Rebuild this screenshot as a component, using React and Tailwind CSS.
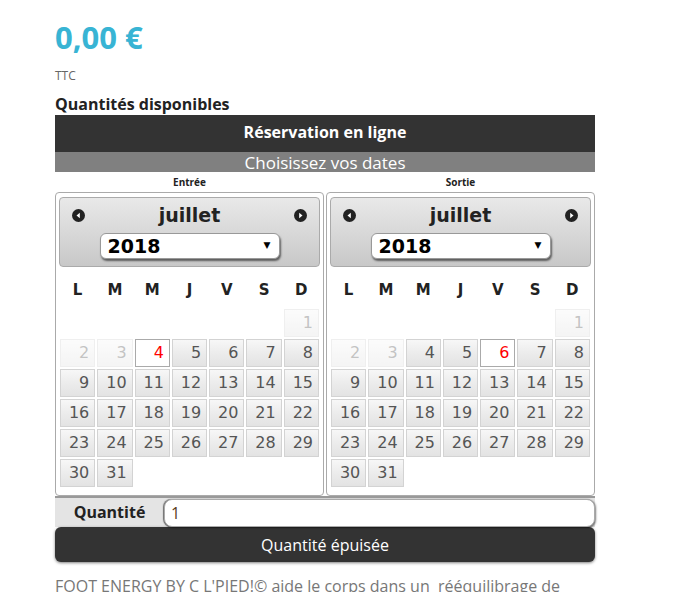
const days = ["L", "M", "M", "J", "V", "S", "D"];

function Arrow({ dir }) {
  return (
    <svg width="13" height="13" viewBox="0 0 13 13">
      <circle cx="6.5" cy="6.5" r="6.5" fill="#222" />
      {dir === "prev" ? (
        <path d="M4.5 6.5 L7.8 3.8 L7.8 9.2 Z" fill="#fff" />
      ) : (
        <path d="M8.5 6.5 L5.2 3.8 L5.2 9.2 Z" fill="#fff" />
      )}
    </svg>
  );
}

function Cell({ n, state }) {
  if (!n) return <div className="h-[28px]" />;
  let cls = "border-[#d3d3d3] bg-gradient-to-b from-[#f7f7f7] via-[#ececec] to-[#e3e3e3] text-[#555]";
  if (state === "off") cls = "border-[#d3d3d3] bg-gradient-to-b from-[#f7f7f7] via-[#ececec] to-[#e3e3e3] text-[#555] opacity-35";
  if (state === "today") cls = "border-[#aaa] bg-white text-[#f00]";
  return (
    <div className={"h-[28px] border text-right pr-[5px] text-[16px] leading-[26px] " + cls}>{n}</div>
  );
}

function Calendar({ today }) {
  const cells = [null, null, null, null, null, null];
  for (let d = 1; d <= 31; d++) cells.push(d);
  return (
    <div className="w-[269px] h-[304px] border border-[#aaa] rounded-[4px] bg-white px-[3px] pt-[4px]">
      <div className="h-[70px] border border-[#aaa] rounded-[4px] bg-gradient-to-b from-[#e9e9e9] to-[#c8c8c8] pt-[5px]">
        <div className="flex items-center justify-between px-[12px] h-[24px]">
          <Arrow dir="prev" />
          <span className="text-[19px] font-bold text-[#222]">juillet</span>
          <Arrow dir="next" />
        </div>
        <div className="flex justify-center mt-[6px]">
          <div className="w-[180px] h-[26px] bg-white rounded-[6px] border border-[#999] shadow-[1px_2px_2px_rgba(0,0,0,0.55)] flex items-center justify-between pl-[7px] pr-[8px]">
            <span className="text-[19px] font-bold text-black leading-none">2018</span>
            <span className="text-[9px] text-black">▼</span>
          </div>
        </div>
      </div>
      <div className="grid grid-cols-7 gap-x-[2px] px-[1px] mt-[12px] h-[20px] items-center">
        {days.map((d, i) => (
          <div key={i} className="text-center text-[15px] font-bold text-[#222]">{d}</div>
        ))}
      </div>
      <div className="grid grid-cols-7 gap-x-[2px] gap-y-[2px] px-[1px] mt-[10px]">
        {cells.map((n, i) => (
          <Cell key={i} n={n} state={n && n < 4 ? "off" : n === today ? "today" : "on"} />
        ))}
      </div>
    </div>
  );
}

export default function App() {
  return (
    <div className="bg-white w-[694px] h-[592px] overflow-hidden" style={{ fontFamily: '"Open Sans", sans-serif' }}>
      <div className="ml-[55px] w-[540px] pt-[16px]">
        <div className="text-[31px] font-bold text-[#38b4d4] leading-[42px]">0,00 €</div>
        <div className="text-[12px] text-[#666] mt-[10px] leading-[16px]">TTC</div>
        <div className="text-[16px] font-bold text-[#222] mt-[9px] leading-[22px]">Quantités disponibles</div>
        <div className="h-[37px] bg-[#333] text-white text-[16px] font-bold flex justify-center pt-[6px] leading-[22px]">
          Réservation en ligne
        </div>
        <div className="h-[20px] bg-[#808080] text-white text-[17px] flex items-center justify-center leading-none">
          Choisissez vos dates
        </div>
        <div className="flex gap-[2px] h-[20px] items-center">
          <div className="w-[269px] text-center text-[10px] font-bold text-[#222]">Entrée</div>
          <div className="w-[269px] text-center text-[10px] font-bold text-[#222]">Sortie</div>
        </div>
        <div className="flex gap-[2px]" style={{ fontFamily: '"DejaVu Sans", Verdana, sans-serif' }}>
          <Calendar today={4} />
          <Calendar today={6} />
        </div>
        <div className="flex h-[31px] border-t-2 border-[#999] bg-[#e4e4e4]">
          <div className="w-[109px] text-center text-[16px] font-bold text-[#222] leading-[28px]">Quantité</div>
          <div className="flex-1 bg-white rounded-[8px] border border-[#aaa] shadow-[-1px_0_1px_rgba(0,0,0,0.5),1px_1px_2px_rgba(0,0,0,0.5)] pl-[6px] text-[16px] text-[#5a3a1a] leading-[27px] mt-[1px]">
            1
          </div>
        </div>
        <div className="h-[35px] bg-[#333] rounded-[6px] shadow-[0_1px_3px_rgba(0,0,0,0.5)] text-white text-[16px] flex items-center justify-center">
          Quantité épuisée
        </div>
        <div className="mt-[12px] text-[16px] text-[#777] whitespace-pre">
          FOOT ENERGY BY C L'PIED!© aide le corps dans un  rééquilibrage de
        </div>
      </div>
    </div>
  );
}
